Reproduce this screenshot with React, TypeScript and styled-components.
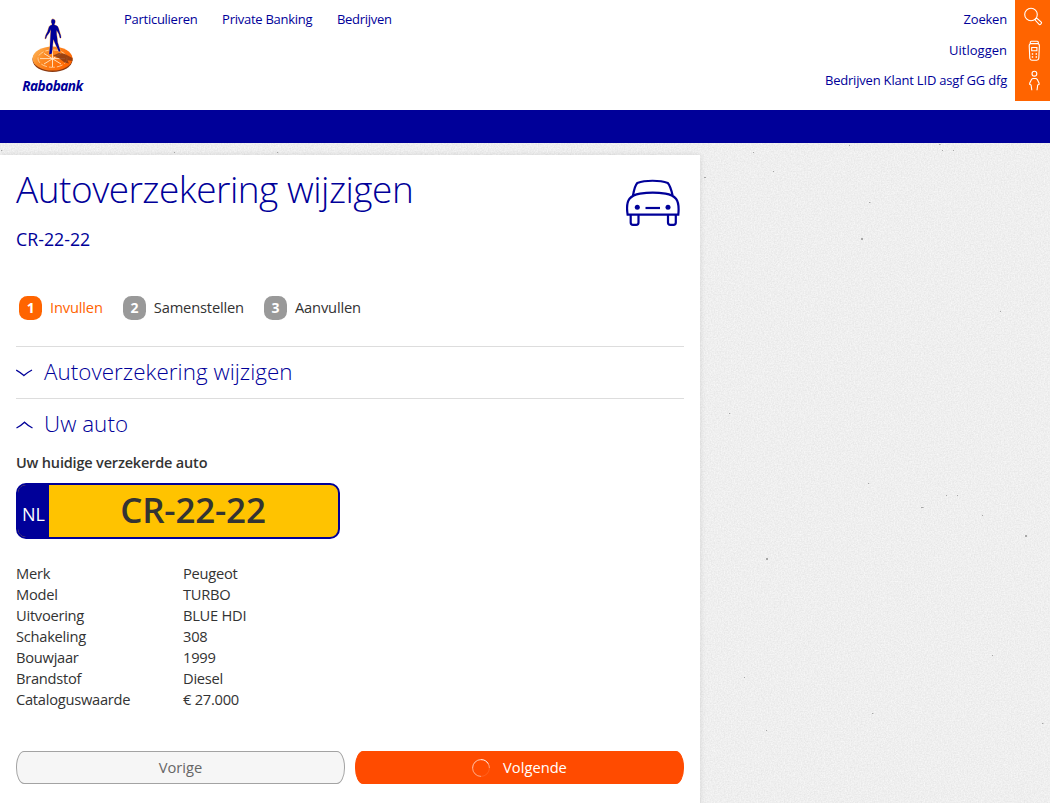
import React from "react";
import styled, { createGlobalStyle } from "styled-components";

const blue = "#000099";
const orange = "#ff6400";
const ink = "#333333";

const GlobalStyle = createGlobalStyle`
  * { box-sizing: border-box; }
  html, body { margin: 0; padding: 0; }
  body {
    background: #efefef;
    color: ${ink};
    font-family: "Open Sans", "Noto Sans", sans-serif;
    font-size: 14.7px;
    letter-spacing: -0.27px;
    line-height: 21px;
  }
  h1, h2, h3, p, dl, dd { margin: 0; font-weight: 400; }
`;

const Page = styled.div`
  position: relative;
  height: 803px;
  overflow: hidden;
`;

const PaperTexture = styled.svg`
  position: absolute;
  inset: 143px 0 0 0;
  width: 100%;
  height: 660px;
  z-index: -1;
`;

const Header = styled.header`
  display: flex;
  align-items: flex-start;
  height: 110px;
  background: #fff;
  color: ${blue};
  font-size: 13px;
  line-height: 20px;
`;

const Brand = styled.a`
  display: flex;
  flex-direction: column;
  align-items: center;
  width: 105px;
  padding-top: 17px;
`;

const BrandName = styled.span`
  font-size: 13.6px;
  font-weight: 700;
  font-style: italic;
  letter-spacing: -0.5px;
  line-height: 18px;
  margin-top: 4px;
`;

const MainNav = styled.nav`
  display: flex;
  gap: 24.7px;
  padding: 9px 0 0 19px;
  flex: 1;
`;

const UserNav = styled.nav`
  display: flex;
  flex-direction: column;
  align-items: flex-end;
  gap: 10.5px;
  padding: 9px 8px 0 0;
`;

const UserLink = styled.span<{ $tight?: boolean }>`
  letter-spacing: ${(p) => (p.$tight ? "-0.2px" : "0")};
`;

const IconRail = styled.div`
  display: flex;
  flex-direction: column;
  align-items: center;
  width: 35px;
  height: 101px;
  background: ${orange};
`;

const NavBar = styled.div`
  height: 33px;
  background: ${blue};
`;

const Card = styled.main`
  width: 700px;
  height: 660px;
  margin-top: 12px;
  padding: 0 16px;
  background: #fff;
  box-shadow: 0 0 6px rgba(0, 0, 0, 0.11);
`;

const CardHead = styled.div`
  display: flex;
  justify-content: space-between;
  height: 141px;
  color: ${blue};
`;

const Title = styled.h1`
  padding-top: 9px;
  font-size: 37px;
  font-weight: 300;
  letter-spacing: -0.5px;
  line-height: 50px;
`;

const Subtitle = styled.p`
  padding-top: 12px;
  font-size: 17.8px;
  letter-spacing: 0;
  line-height: 27px;
`;

const CarIcon = styled.svg`
  margin: 22px 3px 0 0;
  width: 56px;
  height: 52px;
`;

const Steps = styled.div`
  display: flex;
  gap: 20px;
  height: 50px;
  padding-left: 3px;
`;

const Step = styled.div<{ $active?: boolean }>`
  display: flex;
  align-items: center;
  gap: 8px;
  height: 24px;
  color: ${(p) => (p.$active ? orange : ink)};
`;

const StepNumber = styled.span<{ $active?: boolean }>`
  width: 23px;
  height: 24px;
  border-radius: 8.5px;
  background: ${(p) => (p.$active ? orange : "#999")};
  color: #fff;
  font-size: 14px;
  font-weight: 700;
  line-height: 24px;
  text-align: center;
`;

const StepLabel = styled.span`
  margin-top: -1px;
  letter-spacing: -0.17px;
`;

const SectionHead = styled.h2`
  display: flex;
  align-items: center;
  gap: 11px;
  height: 52px;
  border-top: 1px solid #ddd;
  color: ${blue};
  font-size: 22.4px;
  font-weight: 300;
  letter-spacing: 0.04px;
`;

const SectionTitle = styled.span`
  margin-top: -2px;
`;

const Caption = styled.h3`
  padding-top: 2px;
  font-size: 14.5px;
  font-weight: 600;
  letter-spacing: -0.18px;
  line-height: 21px;
`;

const Plate = styled.div`
  display: flex;
  width: 324px;
  height: 56px;
  margin-top: 10px;
  overflow: hidden;
  border: 2px solid ${blue};
  border-radius: 10px;
  background: #ffc300;
  letter-spacing: 0;
`;

const Country = styled.span`
  width: 31px;
  padding-top: 3px;
  background: ${blue};
  color: #fff;
  font-size: 18px;
  line-height: 52px;
  text-align: center;
`;

const PlateNumber = styled.strong`
  flex: 1;
  padding-right: 1px;
  font-size: 35px;
  font-weight: 600;
  letter-spacing: -0.2px;
  line-height: 50px;
  text-align: center;
`;

const Specs = styled.dl`
  display: grid;
  grid-template-columns: 167px 1fr;
  margin-top: 24px;
`;

const Actions = styled.div`
  display: flex;
  gap: 10px;
  margin-top: 41px;
`;

const Button = styled.button<{ $primary?: boolean }>`
  display: flex;
  flex: 1;
  align-items: center;
  justify-content: center;
  gap: 13px;
  height: 33px;
  padding: 0;
  border: 1px solid ${(p) => (p.$primary ? "#ff4b00" : "#a3a3a3")};
  border-radius: 8px / 16px;
  background: ${(p) => (p.$primary ? "#ff4b00" : "#f6f6f6")};
  color: ${(p) => (p.$primary ? "#fff" : "#666")};
  font: inherit;
`;

const specs = [
  ["Merk", "Peugeot"],
  ["Model", "TURBO"],
  ["Uitvoering", "BLUE HDI"],
  ["Schakeling", "308"],
  ["Bouwjaar", "1999"],
  ["Brandstof", "Diesel"],
  ["Cataloguswaarde", "€ 27.000"],
];

const specks = [
  [704, 177, 2], [753, 152, 1], [773, 171, 1], [869, 202, 1.4], [861, 238, 2], [939, 144, 1.6],
  [1025, 535, 2], [766, 558, 2], [982, 515, 1], [946, 495, 1], [957, 495, 1], [729, 413, 1.2],
  [868, 483, 1.2], [1000, 311, 1], [849, 145, 1], [942, 150, 1], [953, 150, 1], [1, 150, 1.3], [277, 152, 1.2],
  [174, 152, 1], [872, 713, 1.4], [744, 677, 1], [992, 655, 1], [1042, 723, 1.4], [766, 730, 1], [921, 507, 2.6],
];

const Chevron = ({ up }: { up?: boolean }) => (
  <svg width="17" height="8" viewBox="0 0 17 8" fill="none" stroke={blue} strokeWidth="1.3">
    <path d={up ? "M0.5 7 Q4.5 5 8.5 1.2 Q12.5 5 16.5 7" : "M0.2 1 Q4 3 7.9 6.6 Q12 3 16 1"} />
  </svg>
);

const Logo = () => (
  <svg width="42" height="56" viewBox="0 0 42 56">
    <defs>
      <linearGradient id="disc" x1="0" x2="1" y1="0" y2="0.5">
        <stop offset="0" stopColor="#ffbe62" />
        <stop offset="0.4" stopColor="#fb8a24" />
        <stop offset="1" stopColor="#ff6500" />
      </linearGradient>
    </defs>
    <ellipse cx="20.5" cy="42.8" rx="20" ry="12.2" fill="#8a3a12" />
    <ellipse cx="20.5" cy="41.6" rx="20" ry="12" fill="url(#disc)" />
    <ellipse cx="20.5" cy="41.6" rx="14.5" ry="8.7" fill="none" stroke="#ffdcae" strokeWidth="0.8" strokeDasharray="6 2" />
    <path d="M20.5 33v17M8 41.6h25M12 36.5l17 10.5M29 36.5l-17 10.5" stroke="#ffe9cc" strokeWidth="0.9" />
    <path d="M21 38.5l6-2.600 6 1.200 7.400 3.800.1 3-5-.6 1.500 3.100-4.500-1-5.500-4.200z" fill="#8a3a12" opacity="0.85" />
    <path
      d="M21.1 2.200c1.500 0 2.200 1 2.100 2.500-.1 1.200-.5 1.900-.8 2.300v1.100c1.900.4 3.200.9 3.700 2.100.9 2 1.300 4.400 2 6.200.6 1.500.9 2.500.9 4.500l-1 .2-1.100-4-2.300-3.900c-.2 2.800.1 5 .5 7.400l.5 4.600 2.700 8.500-1.300 1.400-3.400-7.500-2.300-5.400-.6 6.200c0 3-.6 6-1 8.300l-2.600.7.9-9 .4-8.300.5-7.900-1.400 3.200-2.600 3.500-1 2.900-1-.2.800-3.400 1.900-3.800 1.300-4.100c.4-1.600 1.500-2.100 3-2.400l.1-1.200c-.6-.7-.8-1.400-.7-2.500.1-1.400.6-2.300 1.800-2.300z"
      fill={blue} stroke="#ffb25c" strokeWidth="0.9" paintOrder="stroke"
    />
  </svg>
);

const RailIcons = () => (
  <svg width="35" height="101" viewBox="0 0 35 101" fill="none" stroke="#fff" strokeWidth="1.1">
    <circle cx="16" cy="14.5" r="6.3" />
    <path d="M20.4 19.2l1.2-1.2 4.9 4.400c.5.8-1.2 2.700-2.200 2.200l-4.400-4.800z" />
    <path d="M15.3 43.4v-1.2q0-1 1-1h6q1 0 1 1v1.2M15.8 43.6h7q1.8.6 1.6 2.2l-.6 12.4q-.2 1.9-2 2h-5q-1.8-.1-2-2l-.6-12.4q-.2-1.6 1.6-2.2z" />
    <path d="M16.7 47.5h5.2v3.2h-5.2z" />
    <path d="M16.8 54h1.4M20.6 54H22M16.8 57h1.4M20.6 57H22" strokeWidth="1.3" />
    <circle cx="19.4" cy="73.7" r="2.4" />
    <path d="M16.8 90.2l-.7-5.2-1.500-.9.2-1.200 1.700-3.400q.6-1 1.800-1h2.200q1.200 0 1.800 1l1.700 3.400.2 1.200-1.500.9-.7 5.200" />
  </svg>
);

const Spinner = () => (
  <svg width="18" height="18" viewBox="0 0 18 18" fill="none" strokeWidth="1">
    <circle cx="9" cy="9" r="8.4" stroke="#fff" strokeOpacity="0.12" />
    <path d="M9 .6A8.4 8.4 0 0 1 16.3 4.8" stroke="#fff" strokeOpacity="0.9" />
    <path d="M16.3 4.8A8.4 8.4 0 0 1 17.4 9" stroke="#fff" strokeOpacity="0.4" />
    <path d="M9 .6A8.4 8.4 0 0 0 .6 9" stroke="#fff" strokeOpacity="0.6" />
    <path d="M.6 9A8.4 8.4 0 0 0 9 17.4" stroke="#fff" strokeOpacity="0.45" />
  </svg>
);

export default function App() {
  return (
    <>
      <GlobalStyle />
      <Page>
        <PaperTexture viewBox="0 143 1050 660" aria-hidden="true">
          <filter id="grain" x="0" y="0" width="100%" height="100%" colorInterpolationFilters="sRGB">
            <feTurbulence type="fractalNoise" baseFrequency="0.7" numOctaves="2" seed="4" />
            <feColorMatrix values="0.1 0 0 0 0.886  0.1 0 0 0 0.886  0.1 0 0 0 0.886  0 0 0 0 1" />
          </filter>
          <rect x="0" y="143" width="1050" height="660" filter="url(#grain)" />
          {specks.map(([x, y, s]) => (
            <rect key={`${x}-${y}`} x={x} y={y} width={s} height={s === 2 && y > 200 ? 2 : 1} fill="#888" opacity="0.7" />
          ))}
        </PaperTexture>
        <Header>
          <Brand>
            <Logo />
            <BrandName>Rabobank</BrandName>
          </Brand>
          <MainNav>
            <span>Particulieren</span>
            <span>Private Banking</span>
            <span>Bedrijven</span>
          </MainNav>
          <UserNav>
            <UserLink $tight>Zoeken</UserLink>
            <UserLink>Uitloggen</UserLink>
            <UserLink $tight>Bedrijven Klant LID asgf GG dfg</UserLink>
          </UserNav>
          <IconRail>
            <RailIcons />
          </IconRail>
        </Header>
        <NavBar />
        <Card>
          <CardHead>
            <div>
              <Title>Autoverzekering wijzigen</Title>
              <Subtitle>CR-22-22</Subtitle>
            </div>
            <CarIcon viewBox="0 0 56 52" fill="none" stroke={blue} strokeWidth="2.2">
              <path d="M8 18.5C9 12.5 10 8.5 12.3 6c8-3 22.5-3 30.5 0C45 8.5 46.3 12.5 47.6 18.5" />
              <path d="M2.6 37.6C1.6 31 2 25 4.5 21.8 7 18.8 10 17.6 15 16.7c8-1.4 17.5-1.4 25.5 0 5 .9 8 2.1 10.5 5.1 2.5 3.2 3 9.2 2.3 15.8z" />
              <path d="M5.7 38v7.5q0 2.3 2.3 2.3h3.2q2.3 0 2.3-2.3V38M43 38v7.5q0 2.3 2.3 2.3h3.2q2.3 0 2.3-2.3V38" />
              <path d="M20.5 31h14.5" />
              <circle cx="12.3" cy="30.3" r="2.5" fill={blue} stroke="none" />
              <circle cx="43" cy="30.3" r="2.5" fill={blue} stroke="none" />
            </CarIcon>
          </CardHead>
          <Steps>
            <Step $active>
              <StepNumber $active>1</StepNumber>
              <StepLabel>Invullen</StepLabel>
            </Step>
            <Step>
              <StepNumber>2</StepNumber>
              <StepLabel>Samenstellen</StepLabel>
            </Step>
            <Step>
              <StepNumber>3</StepNumber>
              <StepLabel>Aanvullen</StepLabel>
            </Step>
          </Steps>
          <SectionHead>
            <Chevron />
            <SectionTitle>Autoverzekering wijzigen</SectionTitle>
          </SectionHead>
          <SectionHead>
            <Chevron up />
            <SectionTitle>Uw auto</SectionTitle>
          </SectionHead>
          <Caption>Uw huidige verzekerde auto</Caption>
          <Plate>
            <Country>NL</Country>
            <PlateNumber>CR-22-22</PlateNumber>
          </Plate>
          <Specs>
            {specs.map(([name, value]) => (
              <React.Fragment key={name}>
                <dt>{name}</dt>
                <dd>{value}</dd>
              </React.Fragment>
            ))}
          </Specs>
          <Actions>
            <Button>Vorige</Button>
            <Button $primary>
              <Spinner />
              Volgende
            </Button>
          </Actions>
        </Card>
      </Page>
    </>
  );
}
